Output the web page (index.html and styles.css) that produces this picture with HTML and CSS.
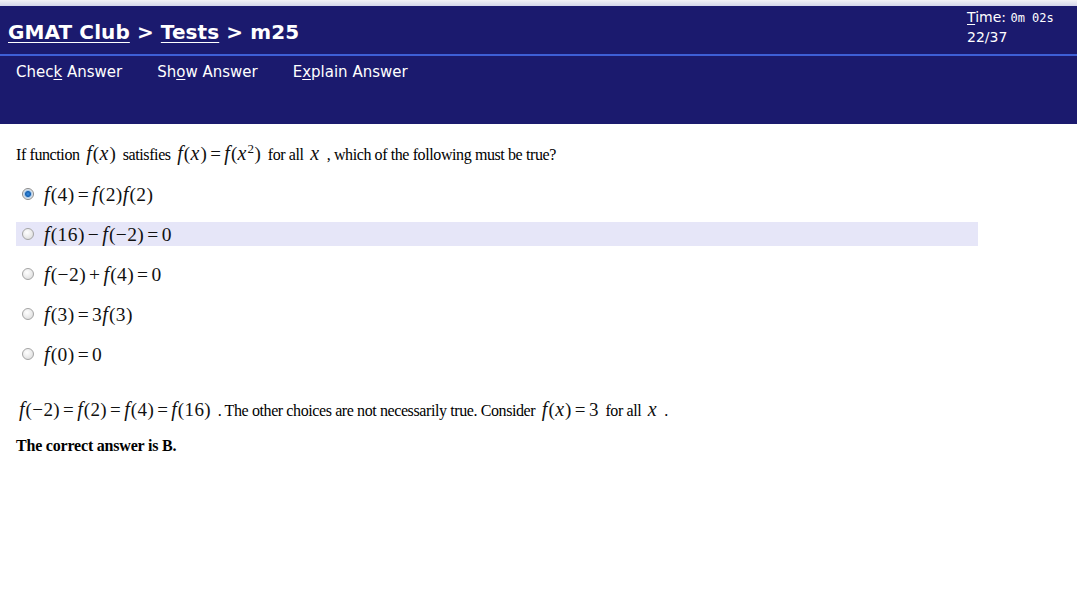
FILE: index.html
```html
<!DOCTYPE html>
<html>
<head>
<meta charset="utf-8">
<link rel="stylesheet" href="styles.css">
</head>
<body>
<div class="topstrip"></div>
<header class="header">
  <div class="titlerow">
    <h1 class="crumbs"><a class="lnk">GMAT Club</a> &gt; <a class="lnk">Tests</a> &gt; m25</h1>
    <div class="timer">
      <div><span class="u">T</span>ime: <span class="mono">0m 02s</span></div>
      <div>22/37</div>
    </div>
  </div>
  <nav class="nav">
    <span>Chec<span class="u">k</span> Answer</span>
    <span>Sh<span class="u">o</span>w Answer</span>
    <span>E<span class="u">x</span>plain Answer</span>
  </nav>
</header>
<main class="content">
  <p class="question">If function <span class="m"><i>f</i>(<i>x</i>)</span> satisfies <span class="m"><i>f</i>(<i>x</i>)<b class="op">=</b><i>f</i>(<i>x</i><sup>2</sup>)</span> for all <span class="m"><i>x</i></span> , which of the following must be true?</p>
  <ul class="choices">
    <li class="choice"><span class="radio checked"></span><span class="m"><i>f</i>(4)<b class="op">=</b><i>f</i>(2)<i>f</i>(2)</span></li>
    <li class="choice hl"><span class="radio"></span><span class="m"><i>f</i>(16)<b class="op">−</b><i>f</i>(−2)<b class="op">=</b>0</span></li>
    <li class="choice"><span class="radio"></span><span class="m"><i>f</i>(−2)<b class="op">+</b><i>f</i>(4)<b class="op">=</b>0</span></li>
    <li class="choice"><span class="radio"></span><span class="m"><i>f</i>(3)<b class="op">=</b>3<i>f</i>(3)</span></li>
    <li class="choice"><span class="radio"></span><span class="m"><i>f</i>(0)<b class="op">=</b>0</span></li>
  </ul>
  <p class="explain"><span class="m"><i>f</i>(−2)<b class="op">=</b><i>f</i>(2)<b class="op">=</b><i>f</i>(4)<b class="op">=</b><i>f</i>(16)</span> . The other choices are not necessarily true. Consider <span class="m"><i>f</i>(<i>x</i>)<b class="op">=</b>3</span> for all <span class="m"><i>x</i></span> .</p>
  <p class="answer">The correct answer is B.</p>
</main>
</body>
</html>
```
FILE: styles.css
```css
html, body { margin: 0; padding: 0; background: #fff; }
body { font-family: "Liberation Serif", "Times New Roman", serif; color: #000; }
.topstrip { height: 6px; background: linear-gradient(#f2f2f6, #d4d6ea); }
.header { background: #1b1a6e; color: #fff; font-family: "DejaVu Sans", Verdana, sans-serif; }
.titlerow { height: 48px; display: flex; justify-content: space-between; border-bottom: 2px solid #3e5fd6; }
.crumbs { margin: 0; padding: 12px 0 0 8px; font-size: 20px; font-weight: bold; line-height: 28px; letter-spacing: 0.1px; }
.lnk { color: #fff; text-decoration: underline; text-decoration-thickness: 1px; text-underline-offset: 3px; }
.timer { padding: 2px 10px 0 0; font-size: 14px; line-height: 19px; width: 100px; }
.mono { font-family: "DejaVu Sans Mono", monospace; font-size: 12px; }
.u { text-decoration: underline; text-underline-offset: 2px; }
.nav { height: 68px; display: flex; gap: 35px; padding: 6px 0 0 16px; box-sizing: border-box; font-size: 15px; line-height: 20px; }
.content { padding: 0 16px; }
.question { margin: 0; padding-top: 19px; font-size: 16px; line-height: 24px; letter-spacing: -0.4px; }
.m { font-family: "Liberation Serif", serif; font-size: 19px; line-height: 16px; letter-spacing: 0.4px; margin: 0 3px; color: #111; }
.m i { font-style: italic; font-size: 20px; letter-spacing: 1px; }
.m .op { font-weight: normal; margin: 0 3px; }
.m sup { font-size: 13px; line-height: 0; }
.choices { list-style: none; margin: 15px 0 0 0; padding: 0; width: 962px; }
.choice { height: 24px; display: flex; align-items: center; margin-bottom: 16px; }
.choice .m { margin: 0; line-height: 24px; font-size: 19.5px; }
.choice .m i { font-size: 20.5px; }
.choice.hl { background: #e6e6f8; }
.radio { width: 12px; height: 12px; border-radius: 50%; border: 1px solid #a4a4a4; background: radial-gradient(circle at 40% 35%, #fff, #d8d8d8); margin: 0 10px 0 6px; box-sizing: border-box; }
.radio.checked { background: radial-gradient(circle, #3a8ee0 0, #1560b0 2.5px, #a8c8e8 3.5px, #f0f0f0 5px); border-color: #8a8a8a; }
.explain { margin: 33px 0 0 0; font-size: 16px; line-height: 24px; letter-spacing: -0.4px; }
.answer { margin: 13px 0 0 0; font-size: 16px; font-weight: bold; line-height: 20px; letter-spacing: -0.2px; }
```
